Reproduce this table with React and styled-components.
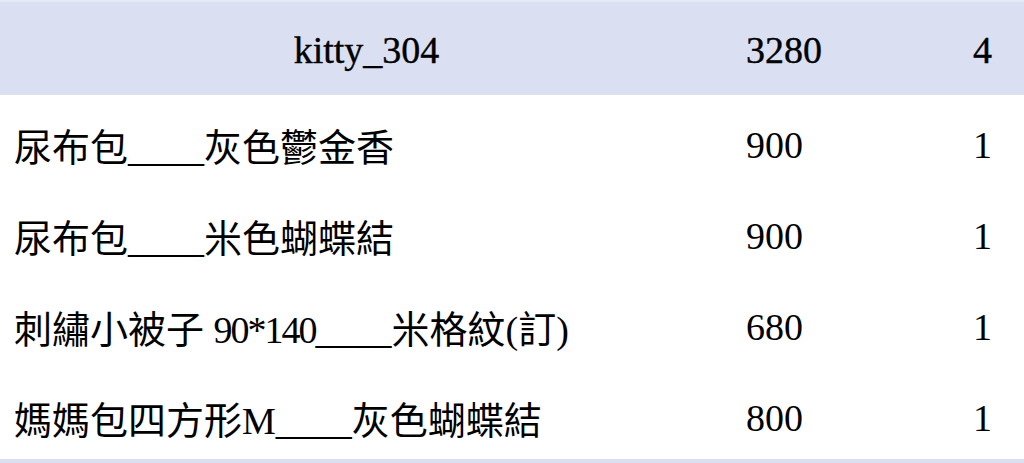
import styled, { createGlobalStyle } from "styled-components";

const GlobalStyle = createGlobalStyle`
  html, body {
    margin: 0;
    padding: 0;
    background: #ffffff;
    overflow: hidden;
  }
`;

const OrderTable = styled.div`
  width: 1024px;
  display: flex;
  flex-direction: column;
  font-family: "Liberation Serif", "Noto Sans CJK TC", serif;
  font-size: 38px;
  color: #000;
  border-top: 2px solid #e6e9f6;
`;

const Row = styled.div`
  display: grid;
  grid-template-columns: 733px 200px 1fr;
  align-items: center;
  box-sizing: border-box;
  height: ${(p) => (p.$head ? "93px" : "91px")};
  padding-top: ${(p) => (p.$head ? "2px" : "8px")};
  background: ${(p) => (p.$head ? "#dae0f2" : "#ffffff")};
  -webkit-text-stroke: ${(p) => (p.$head ? "0.4px #000" : "0")};
`;

const NameCell = styled.div`
  text-align: ${(p) => (p.$head ? "center" : "left")};
  padding-left: ${(p) => (p.$head ? "0" : "14px")};
  white-space: nowrap;
`;

const Digits = styled.span`
  letter-spacing: -2px;
`;

const PriceCell = styled.div`
  padding-left: 13px;
`;

const QtyCell = styled.div`
  text-align: right;
  padding-right: 32px;
`;

const order = {
  name: "kitty_304",
  total: 3280,
  qty: 4,
  items: [
    { name: ["尿布包____灰色鬱金香"], price: 900, qty: 1 },
    { name: ["尿布包____米色蝴蝶結"], price: 900, qty: 1 },
    { name: ["刺繡小被子 ", "90*140", "____米格紋(訂)"], price: 680, qty: 1 },
    { name: ["媽媽包四方形M____灰色蝴蝶結"], price: 800, qty: 1 },
  ],
};

const App = () => {
  return (
    <>
      <GlobalStyle />
      <OrderTable>
        <Row $head>
          <NameCell $head>{order.name}</NameCell>
          <PriceCell>{order.total}</PriceCell>
          <QtyCell>{order.qty}</QtyCell>
        </Row>
        {order.items.map((item, i) => (
          <Row key={i}>
            <NameCell>
              {item.name.map((part, j) =>
                j === 1 ? <Digits key={j}>{part}</Digits> : part
              )}
            </NameCell>
            <PriceCell>{item.price}</PriceCell>
            <QtyCell>{item.qty}</QtyCell>
          </Row>
        ))}
        <Row $head />
      </OrderTable>
    </>
  );
};

export default App;
